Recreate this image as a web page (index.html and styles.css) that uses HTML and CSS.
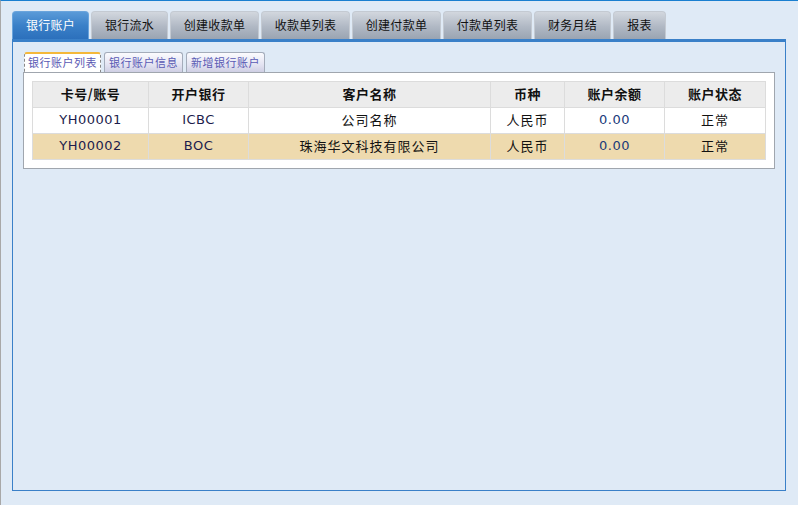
FILE: index.html
```html
<!DOCTYPE html>
<html lang="zh-CN">
<head>
  <meta charset="UTF-8">
  <title>银行账户</title>
  <link rel="stylesheet" href="styles.css">
</head>
<body>
  <div class="page">
    <ul class="tabs">
      <li class="tab active" style="width:77px">银行账户</li>
      <li class="tab" style="width:77px">银行流水</li>
      <li class="tab" style="width:89px">创建收款单</li>
      <li class="tab" style="width:89px">收款单列表</li>
      <li class="tab" style="width:89px">创建付款单</li>
      <li class="tab" style="width:89px">付款单列表</li>
      <li class="tab" style="width:77px">财务月结</li>
      <li class="tab" style="width:53px">报表</li>
    </ul>
    <div class="panel">
      <ul class="subtabs">
        <li class="subtab active">银行账户列表</li>
        <li class="subtab">银行账户信息</li>
        <li class="subtab">新增银行账户</li>
      </ul>
      <div class="box">
        <table class="grid">
          <colgroup>
            <col style="width:116px">
            <col style="width:100px">
            <col style="width:242px">
            <col style="width:74px">
            <col style="width:100px">
            <col style="width:101px">
          </colgroup>
          <thead>
            <tr>
              <th>卡号/账号</th>
              <th>开户银行</th>
              <th>客户名称</th>
              <th>币种</th>
              <th>账户余额</th>
              <th>账户状态</th>
            </tr>
          </thead>
          <tbody>
            <tr>
              <td class="code">YH00001</td>
              <td class="code">ICBC</td>
              <td>公司名称</td>
              <td>人民币</td>
              <td class="money">0.00</td>
              <td>正常</td>
            </tr>
            <tr class="alt">
              <td class="code">YH00002</td>
              <td class="code">BOC</td>
              <td>珠海华文科技有限公司</td>
              <td>人民币</td>
              <td class="money">0.00</td>
              <td>正常</td>
            </tr>
          </tbody>
        </table>
      </div>
    </div>
  </div>
</body>
</html>
```

FILE: styles.css
```css
:root {
  --page-bg: #dfeaf6;
  --blue: #3a80c8;
  --cjk: "Noto Sans CJK SC", "DejaVu Sans", sans-serif;
}
html, body {
  margin: 0;
  height: 100%;
}
body {
  background: var(--page-bg);
  border-top: 1px solid #1a7fd0;
  border-left: 1px solid #a8a8a8;
  box-sizing: border-box;
  font-family: var(--cjk);
  font-size: 13px;
}
.page {
  padding: 10px 12px 0 11px;
}
.tabs {
  list-style: none;
  margin: 0;
  padding: 0;
  display: flex;
  gap: 2px;
  height: 28px;
}
.tab {
  box-sizing: border-box;
  height: 28px;
  line-height: 26px;
  font-size: 12px;
  letter-spacing: 0.3px;
  text-align: center;
  color: #111;
  background: linear-gradient(#d2d7de, #b0b8c4 55%, #9aa4b2);
  border: 1px solid #c4cad2;
  border-bottom: none;
  border-radius: 4px 4px 0 0;
}
.tab.active {
  color: #fff;
  background: linear-gradient(#5a9ad8, #3a80c8 50%, #2c70bc);
  border-color: #6aa4dc;
}
.panel {
  height: 452px;
  box-sizing: border-box;
  border: 1px solid var(--blue);
  border-top: 3px solid var(--blue);
  padding: 10px 10px 0 10px;
}
.subtabs {
  list-style: none;
  margin: 0;
  padding: 0 0 0 1px;
  display: flex;
  gap: 3px;
  height: 20px;
}
.subtab {
  box-sizing: border-box;
  width: 79px;
  height: 20px;
  line-height: 18px;
  font-size: 11px;
  text-align: center;
  color: #5a5ab4;
  letter-spacing: 0.5px;
  background: linear-gradient(#fbfbfe, #e4e4f2 60%, #cfcfe4);
  border: 1px solid #a4acba;
  border-bottom: none;
  border-radius: 3px 3px 0 0;
}
.subtab.active {
  width: 77px;
  background: #fff;
  border: 1px dashed #888;
  border-top: 2px solid #f4b83a;
  border-bottom: none;
  line-height: 17px;
}
.box {
  width: 752px;
  box-sizing: border-box;
  background: #fff;
  border: 1px solid #a0a6ae;
  padding: 8px;
}
.grid {
  border-collapse: collapse;
  table-layout: fixed;
  width: 733px;
  border-right: 1px solid #a8a8a8;
}
.grid th, .grid td {
  height: 26px;
  padding: 0 0 2px;
  box-sizing: border-box;
  text-align: center;
  border: 1px solid #dcdcdc;
  white-space: nowrap;
}
.grid th {
  background: #ececec;
  font-weight: bold;
  font-size: 13px;
  letter-spacing: 0.5px;
  color: #111;
}
.grid td {
  color: #111;
  letter-spacing: 1px;
}
.grid td.code {
  font-family: "DejaVu Sans", sans-serif;
  color: #1c1c4c;
  letter-spacing: 0.5px;
}
.grid td.money {
  font-family: "DejaVu Sans", sans-serif;
  color: #1a3a7a;
  letter-spacing: 0.5px;
}
.grid tr.alt td {
  background: #eedaae;
}
```
